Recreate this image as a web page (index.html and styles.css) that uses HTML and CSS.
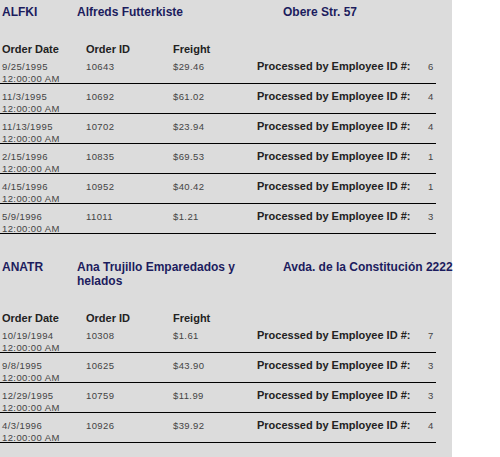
FILE: index.html
```html
<!DOCTYPE html>
<html>
<head>
<meta charset="utf-8">
<link rel="stylesheet" href="styles.css">
</head>
<body>
<div class="report">
  <section class="customer">
    <div class="cust-head">
      <div class="cust-id">ALFKI</div>
      <div class="cust-name">Alfreds Futterkiste</div>
      <div class="cust-addr">Obere Str. 57</div>
    </div>
    <div class="cols">
      <div>Order Date</div><div>Order ID</div><div>Freight</div>
    </div>
    <div class="order"><div class="date"><span>9/25/1995</span><span>12:00:00 AM</span></div><div>10643</div><div>$29.46</div><div class="lbl">Processed by Employee ID #:</div><div>6</div></div>
    <div class="order"><div class="date"><span>11/3/1995</span><span>12:00:00 AM</span></div><div>10692</div><div>$61.02</div><div class="lbl">Processed by Employee ID #:</div><div>4</div></div>
    <div class="order"><div class="date"><span>11/13/1995</span><span>12:00:00 AM</span></div><div>10702</div><div>$23.94</div><div class="lbl">Processed by Employee ID #:</div><div>4</div></div>
    <div class="order"><div class="date"><span>2/15/1996</span><span>12:00:00 AM</span></div><div>10835</div><div>$69.53</div><div class="lbl">Processed by Employee ID #:</div><div>1</div></div>
    <div class="order"><div class="date"><span>4/15/1996</span><span>12:00:00 AM</span></div><div>10952</div><div>$40.42</div><div class="lbl">Processed by Employee ID #:</div><div>1</div></div>
    <div class="order"><div class="date"><span>5/9/1996</span><span>12:00:00 AM</span></div><div>11011</div><div>$1.21</div><div class="lbl">Processed by Employee ID #:</div><div>3</div></div>
  </section>
  <section class="customer">
    <div class="cust-head">
      <div class="cust-id">ANATR</div>
      <div class="cust-name">Ana Trujillo Emparedados y helados</div>
      <div class="cust-addr">Avda. de la Constitución 2222</div>
    </div>
    <div class="cols">
      <div>Order Date</div><div>Order ID</div><div>Freight</div>
    </div>
    <div class="order"><div class="date"><span>10/19/1994</span><span>12:00:00 AM</span></div><div>10308</div><div>$1.61</div><div class="lbl">Processed by Employee ID #:</div><div>7</div></div>
    <div class="order"><div class="date"><span>9/8/1995</span><span>12:00:00 AM</span></div><div>10625</div><div>$43.90</div><div class="lbl">Processed by Employee ID #:</div><div>3</div></div>
    <div class="order"><div class="date"><span>12/29/1995</span><span>12:00:00 AM</span></div><div>10759</div><div>$11.99</div><div class="lbl">Processed by Employee ID #:</div><div>3</div></div>
    <div class="order"><div class="date"><span>4/3/1996</span><span>12:00:00 AM</span></div><div>10926</div><div>$39.92</div><div class="lbl">Processed by Employee ID #:</div><div>4</div></div>
  </section>
</div>
</body>
</html>
```

FILE: styles.css
```css
html, body {
  margin: 0;
  padding: 0;
  background: #ffffff;
}
body {
  font-family: "Liberation Sans", Arial, sans-serif;
}
.report {
  width: 452px;
  min-height: 457px;
  background: #dcdcdc;
}
.customer {
  padding-top: 5px;
  padding-bottom: 21px;
}
.cust-head {
  display: grid;
  grid-template-columns: 75px 180px 1fr;
  padding-left: 2px;
  font-size: 12px;
  font-weight: bold;
  line-height: 14px;
  color: #1c1c5e;
}
.cust-addr {
  padding-left: 26px;
  white-space: nowrap;
}
.cols {
  display: grid;
  grid-template-columns: 84px 87px 84px;
  padding-left: 2px;
  margin-top: 25px;
  margin-bottom: -1px;
  font-size: 11px;
  font-weight: bold;
  line-height: 11px;
  color: #222222;
}
.order {
  display: grid;
  grid-template-columns: 84px 87px 84px 171px 1fr;
  align-items: start;
  box-sizing: border-box;
  width: 436px;
  height: 30px;
  padding-left: 2px;
  padding-top: 7px;
  border-bottom: 1px solid #000000;
  font-size: 9.5px;
  letter-spacing: 0.4px;
  line-height: 11.5px;
  color: #444444;
}
.date span {
  display: block;
}
.lbl {
  font-size: 11px;
  font-weight: bold;
  letter-spacing: 0;
  color: #222222;
}
```
